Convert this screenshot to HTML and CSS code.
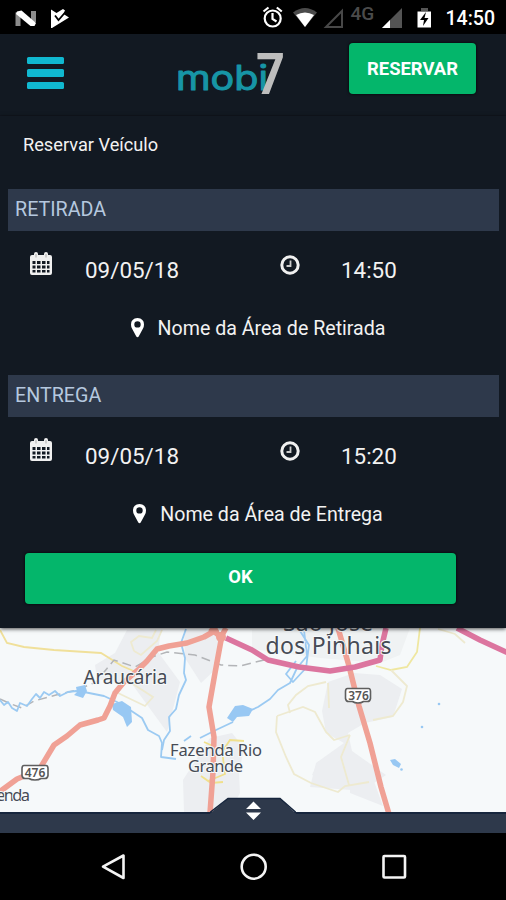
FILE: index.html
```html
<!DOCTYPE html>
<html lang="pt-BR">
<head>
  <meta charset="UTF-8" />
  <meta name="viewport" content="width=device-width, initial-scale=1.0"/>
  <title>mobi7 – Reservar Veículo</title>
  <link rel="stylesheet" href="styles.css">
</head>
<body>

  <div class="status-bar">
    <svg class="status-left" width="58" height="24" viewBox="14 5 58 24">
      <path d="M15.500 11.500l5-1v14.500h-5zM31 10h5v11l-5 3z" fill="#8c8c8c"/>
      <path d="M17 10.500l4.500-1L36 22l-1.500 3h-4L16 13z" fill="#fff"/>
      <path d="M51 8.500L56.500 12 63 8l2 1.500-1.500 3.500 5.500 3.500L52 27h-1z" fill="#fff"/>
      <path d="M55 14.500l3.500 4.500 7-8" stroke="#000" stroke-width="1.800" fill="none"/>
    </svg>
    <svg class="status-right" width="172" height="28" viewBox="262 4 172 28">
      <g fill="none" stroke="#fff" stroke-width="2.200">
        <circle cx="272.700" cy="18.500" r="8"/>
        <path d="M272.500 13v6l4 2.500M263.500 11.500l5-4M276.800 7.500l5 4"/>
      </g>
      <path d="M293 12.500q12-9 24 0L305 27z" fill="#4b4b4b"/>
      <path d="M296 15q9-5 18 0l-9 12z" fill="#fff"/>
      <path d="M326 27l16-16v16z" fill="none" stroke="#484848" stroke-width="2"/>
      <text x="350.500" y="19.500" class="net">4G</text>
      <path d="M382 28l20-20v20z" fill="#545454"/>
      <path d="M382 28l8-8v8z" fill="#fff"/>
      <path d="M421 8h7v3h-7z" fill="#555"/>
      <path d="M417.500 11.500h13.500v16h-13.500z" fill="#fff"/>
      <path d="M426 12l-6 8h4l-1 6 5.500-8h-4z" fill="#000"/>
    </svg>
    <span class="clock">14:50</span>
  </div>

  <header class="header">
    <button class="menu" aria-label="Menu">
      <span></span>
      <span></span>
      <span></span>
    </button>
    <svg class="logo" width="112" height="48" viewBox="174 49 112 48">
      <text x="176" y="89.500" textLength="92" lengthAdjust="spacingAndGlyphs" class="logo-name">mobi</text>
      <text x="256" y="94" textLength="29" lengthAdjust="spacingAndGlyphs" class="logo-seven">7</text>
    </svg>
    <button class="btn btn-reserve">RESERVAR</button>
  </header>

  <main class="panel">
    <h1 class="title">Reservar Veículo</h1>

    <h2 class="section">RETIRADA</h2>
    <div class="when">
      <svg class="icon-calendar" width="22" height="24" viewBox="0 0 22 24">
        <use href="#calendar"/>
      </svg>
      <span class="date">09/05/18</span>
      <svg class="icon-clock" width="20" height="20" viewBox="0 0 20 20">
        <use href="#clock"/>
      </svg>
      <span class="time">14:50</span>
    </div>
    <div class="place">
      <svg width="13" height="20" viewBox="0 0 13 20"><use href="#pin"/></svg>
      <span>Nome da Área de Retirada</span>
    </div>

    <h2 class="section">ENTREGA</h2>
    <div class="when">
      <svg class="icon-calendar" width="22" height="24" viewBox="0 0 22 24">
        <use href="#calendar"/>
      </svg>
      <span class="date">09/05/18</span>
      <svg class="icon-clock" width="20" height="20" viewBox="0 0 20 20">
        <use href="#clock"/>
      </svg>
      <span class="time">15:20</span>
    </div>
    <div class="place place-last">
      <svg width="13" height="20" viewBox="0 0 13 20"><use href="#pin"/></svg>
      <span>Nome da Área de Entrega</span>
    </div>

    <button class="btn btn-ok">OK</button>
  </main>

  <div class="map">
    <svg width="506" height="184" viewBox="0 628 506 184">
      <!-- urban areas -->
      <g fill="#eceef1">
        <path d="M95 665l20-12 12-23h34l-3 22 22 30-13 50-35-48-35-5z"/>
        <path d="M184 630h35v36l-18 17-16-25z"/>
        <path d="M183 780l27-42 22-5 12 15-5 25 1 20-10 19h-46z"/>
        <path d="M328 682l26-9 26 2 22 14-9 28-28 6-17 10 4 18 34 24-18 12-17 3-41-3 6-24 28-20-18-10-4-22z"/>
        <path d="M318 762l24-14-1 12 9 27-38-12z"/>
        <path d="M252 630h136l22-2-10 27-20 8-60-5-68-9z" fill="#eff2f3"/>
        <path d="M350 784l22-8 11 30-33-13z"/>
      </g>
      <!-- minor roads -->
      <g fill="none" stroke="#eeead0" stroke-width="1.800">
        <path d="M0 630l7 13 17 4 30 3 47 3 21 13 14 6" stroke="#f0e09a"/>
        <path d="M134 651l-3-9 8-6 13 2 4-8M134 651l7 4 16-14 5-11M118 693l27 13 8-9-20-13-8-2"/>
        <path d="M420 628l-3 24-10 15-16 3-15-4" stroke="#efe7a0"/>
        <path d="M391 670l16 16-4 16-10 14-20 4M290 713l-2-8 8-10 12-9 18-4M277 716l-1 16 10 25 8 17 17 9 27 9 7-6 24-4M277 716l26-9 12 5 11 20 8 8 16-5M350 735l-9 22 8 28M328 683l1 25M438 629l17 5 10 9"/>
        <path d="M204 742l18 8 3 24-17 7-7-5M222 752l8-12 14 1M204 778l7 5 12-1" stroke="#f0e08c"/>
      </g>
      <!-- railway -->
      <path d="M0 699l11 5 11 4 12-7 22-6 21-5 19-8 18-22 21 7 17-10 15-5 28 3 26 10 19 1 24-6" fill="none" stroke="#b3b5b8" stroke-width="1.500" stroke-dasharray="9 5"/>
      <!-- water -->
      <g fill="none" stroke="#9bcaf2" stroke-width="1.800" stroke-linejoin="round">
        <path d="M0 700l4 5 4-3 4 6 5 3 3-8 7 3 5-7 4-5 4 4 4-6 5 3 6-4 5 5 8-4 8-1 8 1 20 4 13 6 13 8 12 8 6 12 11 6 3 7-1 14 15 2"/>
        <path d="M186 629l-5 14 4 15-1 15 2 7-7 15-3 14-7 8 1 14-6 9-2 10"/>
        <path d="M184 741l7-5M200 738l16-8 17-8M247 712l11-5 12-8 8-9 12-7 7-15 10-12-3-26M300 631l9 14-3 23-13 14-7-8 10-13"/>
      </g>
      <g fill="#98c8f3">
        <path d="M76 687l9-2 2 6-4 7-9-3 3-3z"/>
        <path d="M112 704l10-3 9 6 1 15-5 5-4-10-10-7z"/>
        <path d="M227 718l8-12 8-1 10 4-4 7-12 1-4 5z"/>
        <path d="M390 760l5-1 6 5-2 4-6-3z"/>
        <circle cx="401.500" cy="769.500" r="1.300"/><circle cx="439" cy="704" r="1.300"/><circle cx="422" cy="727" r="1.300"/>
      </g>
      <!-- highways -->
      <g fill="none" stroke-linejoin="round">
        <g stroke="#f0a195" stroke-width="5.500">
          <path d="M-2 793l19-14 22-9 15-25 13-9 13-11 18-5 6-2 6-12 5-13 9-11 15-13 8-8 10-12 12-3 18-3 17-6 14-8"/>
          <path d="M222 635l-7 38-6 34 5 30-1 35-3 41M210 628l11 9 5-9"/>
          <path d="M338 628l11 38 10 40 11 37 11 44 8 27"/>
        </g>
        <g stroke="#dc759f" stroke-width="5.500">
          <path d="M226 638l26 12 16 10 31 7 31 4 25-4 25-7 2-15 4-17"/>
          <path d="M457 628l23 12 28 13"/>
        </g>
        <circle cx="221" cy="637" r="5" fill="#f0a195"/>
      </g>
      <!-- road shields -->
      <g fill="#fff" stroke="#5e5e5e" stroke-width="1.600">
        <path d="M24 765.500h22q2 0 2 3v7q-.500 3-3 3h-4q-2 1.500-6 1.500t-6-1.500h-4q-2.500 0-3-3v-7q0-3 2-3z"/>
        <path d="M347.500 688.500h21q2 0 2 3v7q-.500 3-3 3h-4q-2 1.500-5.500 1.500t-5.500-1.500h-4q-2.500 0-3-3v-7q0-3 2-3z"/>
      </g>
      <g class="shield">
        <text x="35" y="777">476</text>
        <text x="358.500" y="700">376</text>
      </g>
      <g class="city">
        <text x="125.500" y="684" textLength="84">Araucária</text>
        <text x="216" y="755.500" textLength="92" class="town">Fazenda Rio</text>
        <text x="215.500" y="772" textLength="55" class="town">Grande</text>
        <text x="328" y="630.500" textLength="90" class="large">São José</text>
        <text x="328.500" y="654" textLength="126" class="large">dos Pinhais</text>
        <text x="-4" y="801" textLength="34" class="town start">enda</text>
      </g>
    </svg>
  </div>

  <div class="drawer">
    <svg class="handle" width="86" height="26" viewBox="210 797 86 26">
      <path d="M210 813.500l18-15h52l16 15V823h-86z" fill="#2e394b"/>
      <path d="M210 812.500l18-14h52l16 14" fill="none" stroke="#17263d" stroke-width="1.500"/>
      <path d="M246 809l7.500-7.500L261 809zM246 812.500h15l-7.500 7.500z" fill="#fff"/>
    </svg>
  </div>

  <nav class="nav-bar">
    <svg width="506" height="67" viewBox="0 833 506 67" fill="none" stroke="#f4f4f4" stroke-width="2.600">
      <path d="M123.500 855.500v22.500L103 866.700z" stroke-linejoin="round"/>
      <circle cx="253.700" cy="866.700" r="12"/>
      <rect x="383.500" y="856" width="21.500" height="21.500" rx="1"/>
    </svg>
  </nav>

  <svg class="symbols" width="0" height="0">
    <symbol id="calendar" viewBox="0 0 22 24">
      <path fill-rule="evenodd" fill="#f0f0f0" d="M2 3h2V2q0-2 2-2t2 2v1h6V2q0-2 2-2t2 2v1h2q2 0 2 2v16q0 2-2 2H2q-2 0-2-2V5q0-2 2-2zM2.500 9v3h3V9zm4.500 0v3h3.500V9zm5 0v3h3.500V9zm5 0v3h2.500V9zM2.500 13.500v3h3v-3zm4.500 0v3h3.500v-3zm5 0v3h3.500v-3zm5 0v3h2.500v-3zM2.500 18v2.500h3V18zm4.500 0v2.500h3.500V18zm5 0v2.500h3.500V18zm5 0v2.500h2.500V18z"/>
      <path d="M6 2v3.500M16 2v3.500" stroke="#aaa" stroke-width="1"/>
    </symbol>
    <symbol id="clock" viewBox="0 0 20 20">
      <circle cx="10" cy="10" r="8.200" fill="none" stroke="#f0f0f0" stroke-width="3"/>
      <path d="M10.500 5.500v5.500H6.500" fill="none" stroke="#ccc" stroke-width="1.800"/>
    </symbol>
    <symbol id="pin" viewBox="0 0 13 20">
      <path fill-rule="evenodd" fill="#fff" d="M6.500 0Q13 .500 13 6.500q0 2-1 4L7.700 18.500q-1.200 1.500-2.400 0L1 10.500q-1-2-1-4Q0 .500 6.500 0zm0 3.200a3.200 3.200 0 1 0 0 6.400 3.200 3.200 0 0 0 0-6.400z"/>
    </symbol>
  </svg>

</body>
</html>
```

FILE: styles.css
```css
* {
  box-sizing: border-box;
}

body {
  font-family: Roboto, sans-serif;
  background: #000;
  color: #f2f2f2;
  margin: 0;
  height: 900px;
  display: flex;
  flex-direction: column;
  overflow: hidden;
}

svg {
  display: block;
  flex: none;
}

.status-bar {
  height: 34px;
  background: #000;
  display: flex;
  align-items: center;
  padding: 2px 11px 0 14px;
}

.status-right {
  margin-left: 190px;
}

.net {
  font-size: 19px;
  font-weight: 500;
  fill: #4b4b4b;
}

.clock {
  margin-left: auto;
  font-size: 19.500px;
  font-weight: 500;
  color: #fff;
}

.header {
  height: 82px;
  background: #121922;
  border-bottom: 1px solid #11161f;
  display: flex;
  align-items: flex-start;
  padding: 9px 30px 0 27px;
}

.menu {
  display: flex;
  flex-direction: column;
  gap: 5px;
  width: 37px;
  margin-top: 14px;
  padding: 0;
  border: none;
  background: none;
}

.menu span {
  height: 7.300px;
  border-radius: 1.500px;
  background: #10b8d0;
}

.logo {
  margin: 6px 0 0 110px;
}

.logo-name {
  font-family: Inter, sans-serif;
  font-size: 34px;
  fill: #1795a6;
  stroke: #1795a6;
  stroke-width: 1px;
  stroke-linejoin: round;
}

.logo-seven {
  font-family: Roboto, sans-serif;
  font-size: 57px;
  font-weight: 700;
  fill: #bdbdbd;
}

.btn {
  border: none;
  border-radius: 4px;
  background: #04b66b;
  color: #fff;
  font-family: inherit;
  font-weight: 700;
  font-size: 18.400px;
  box-shadow: 0 0 3px #000;
  cursor: pointer;
}

.btn-reserve {
  width: 127px;
  height: 51px;
  margin-left: auto;
  padding: 0;
}

.panel {
  height: 512px;
  background: #121922;
  padding: 0 7px 0 8px;
  position: relative;
  box-shadow: 0 1px 4px rgba(0,0,0,0.7);
  z-index: 1;
}

.title {
  margin: 0;
  padding: 17px 0 0 15px;
  height: 73px;
  font-size: 18.200px;
  font-weight: 400;
  line-height: 24px;
}

.section {
  margin: 0;
  height: 42px;
  padding-left: 7px;
  background: #2e394b;
  color: #b5c8df;
  font-size: 19.700px;
  font-weight: 400;
  line-height: 41px;
}

.when {
  display: grid;
  grid-template-columns: 55px 195px 61px 1fr;
  height: 66px;
  padding: 21px 0 0 22px;
  font-size: 22.400px;
  line-height: 36px;
}

.icon-clock {
  margin-top: 3px;
}

.place {
  display: flex;
  justify-content: center;
  align-items: center;
  gap: 14px;
  height: 62px;
  padding-left: 9px;
  margin-bottom: 16px;
  font-size: 19.600px;
}

.place-last {
  margin-bottom: 8px;
}

.btn-ok {
  display: block;
  width: 431px;
  height: 51px;
  margin-left: 17px;
  padding: 0 0 4px;
}

.map {
  height: 184px;
  background: #f6f9fa;
}

.city {
  font-family: "Noto Sans", sans-serif;
  font-size: 19px;
  fill: #464b55;
  text-anchor: middle;
  paint-order: stroke;
  stroke: #f6f9fa;
  stroke-width: 2px;
}

.town {
  font-size: 16.500px;
}

.large {
  font-size: 23px;
}

.start {
  text-anchor: start;
}

.shield {
  font-family: "Noto Sans", sans-serif;
  font-size: 12px;
  font-weight: 600;
  fill: #555;
  text-anchor: middle;
}

.drawer {
  height: 21px;
  background: #2e394b;
  border-top: 2px solid #17263d;
  position: relative;
}

/* tab that sticks out over the map */
.handle {
  position: absolute;
  left: 210px;
  top: -17px;
}

.nav-bar {
  height: 67px;
  background: #000;
}

.symbols {
  position: absolute;
}
```
